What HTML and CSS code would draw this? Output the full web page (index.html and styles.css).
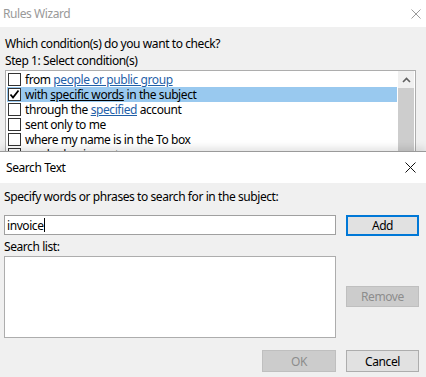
FILE: index.html
```html
<!DOCTYPE html>
<html>
<head>
<meta charset="utf-8">
<link rel="stylesheet" href="styles.css">
</head>
<body>
<div class="win rules">
  <div class="titlebar">
    <span class="title inactive">Rules Wizard</span>
    <svg class="close" width="10" height="10" viewBox="0 0 10 10"><path d="M0.5 0.5L9.5 9.5M9.5 0.5L0.5 9.5" stroke="#9a9a9a" stroke-width="1" fill="none"/></svg>
  </div>
  <div class="rbody">
    <p class="q">Which condition(s) do you want to check?</p>
    <p class="step">Step 1: Select condition(s)</p>
    <div class="listbox">
      <div class="rows">
        <div class="row"><span class="cb"></span><span class="rt">from <span class="link">people or public group</span></span></div>
        <div class="row sel"><span class="cb"><svg width="11" height="11" viewBox="0 0 11 11"><path d="M1.5 5.5L4 8.5L9.5 1.5" stroke="#000" stroke-width="1.8" fill="none"/></svg></span><span class="rt">with <span class="ul">specific words</span> in the subject</span></div>
        <div class="row"><span class="cb"></span><span class="rt">through the <span class="link">specified</span> account</span></div>
        <div class="row"><span class="cb"></span><span class="rt">sent only to me</span></div>
        <div class="row"><span class="cb"></span><span class="rt">where my name is in the To box</span></div>
        <div class="row"><span class="cb"></span><span class="rt">marked as importance</span></div>
      </div>
      <div class="vscroll">
        <div class="arrow"><svg width="9" height="6" viewBox="0 0 9 6"><path d="M1 5L4.5 1.5L8 5" stroke="#606060" stroke-width="1.6" fill="none"/></svg></div>
        <div class="thumb"></div>
      </div>
    </div>
  </div>
</div>
<div class="win dialog">
  <div class="titlebar dtitle">
    <span class="title">Search Text</span>
    <svg class="close" width="11" height="11" viewBox="0 0 11 11"><path d="M0.5 0.5L10.5 10.5M10.5 0.5L0.5 10.5" stroke="#111" stroke-width="1" fill="none"/></svg>
  </div>
  <div class="dbody">
    <p class="lbl">Specify words or phrases to search for in the subject:</p>
    <div class="grid">
      <div class="input"><span>invoice</span><span class="caret"></span></div>
      <button class="btn default">Add</button>
      <p class="lbl2">Search list:</p>
      <div></div>
      <div class="list"></div>
      <div class="side"><button class="btn disabled">Remove</button></div>
      <button class="btn disabled ok">OK</button>
      <button class="btn cancel">Cancel</button>
    </div>
  </div>
</div>
</body>
</html>
```
FILE: styles.css
```css
* { box-sizing: border-box; }
html, body { margin: 0; padding: 0; }
body {
  width: 426px;
  height: 377px;
  overflow: hidden;
  background: #f0f0f0;
  font-family: "Noto Sans", "Open Sans", sans-serif;
  font-size: 12px;
  letter-spacing: -0.42px;
  color: #000;
}
p { margin: 0; }
.win { width: 426px; background: #f0f0f0; }
.rules { height: 151px; overflow: hidden; }
.titlebar {
  height: 27px;
  background: #fff;
  display: flex;
  align-items: center;
  justify-content: space-between;
  padding: 0 5px 0 3px;
}
.title { line-height: 16px; }
.inactive { color: #999; }
.rbody { padding: 9px 0 0 5px; }
.q { line-height: 16px; }
.step { line-height: 16px; margin-top: 1px; }
.listbox {
  margin-top: 1px;
  width: 411px;
  height: 90px;
  border: 1px solid #adadad;
  background: #fff;
  display: flex;
}
.rows { flex: 1; padding-top: 1px; }
.row {
  height: 15px;
  margin: 0 1px;
  display: flex;
  align-items: center;
  gap: 4px;
  padding-left: 1px;
  white-space: nowrap;
}
.rt { line-height: 15px; }
.row.sel { background: #99c9ef; }
.cb {
  width: 13px;
  height: 13px;
  border: 1px solid #333;
  background: #fff;
  display: flex;
  align-items: center;
  justify-content: center;
  flex: none;
}
.link { color: #1f5fa8; text-decoration: underline; }
.ul { text-decoration: underline; }
.vscroll {
  width: 16px;
  margin-right: 1px;
  display: flex;
  flex-direction: column;
  background: #f0f0f0;
}
.arrow {
  height: 17px;
  display: flex;
  align-items: center;
  justify-content: center;
  background: #f0f0f0;
}
.thumb { flex: 1; background: #cdcdcd; }

.dialog {
  height: 226px;
  border-top: 1px solid #9a9a9a;
  box-shadow: 0 -3px 8px rgba(0,0,0,0.12);
  position: relative;
}
.dtitle { height: 31px; padding: 0 10px 0 6px; }
.dbody { padding: 6px 7px 0 4px; }
.lbl { line-height: 16px; }
.grid {
  margin-top: 10px;
  display: grid;
  grid-template-columns: 332px 73px;
  column-gap: 10px;
}
.input {
  height: 20px;
  border: 1px solid #a0a0a0;
  background: #fff;
  display: flex;
  align-items: center;
  padding-left: 2px;
}
.caret { width: 1px; height: 14px; background: #000; }
.btn {
  font: inherit;
  letter-spacing: inherit;
  height: 21px;
  padding: 0;
  background: #e1e1e1;
  border: 1px solid #adadad;
  color: #000;
}
.btn.default { border: 2px solid #0078d7; }
.btn.disabled { background: #cccccc; border-color: #bfbfbf; color: #8d8d8d; }
.lbl2 { line-height: 16px; margin-top: 3px; }
.list {
  margin-top: 1px;
  height: 82px;
  border: 1px solid #adadad;
  background: #fff;
}
.side { padding-top: 31px; display: flex; flex-direction: column; }
.side .btn { width: 73px; height: 21px; }
.ok, .cancel { margin-top: 12px; height: 22px; }
.ok { width: 74px; justify-self: end; }
```
